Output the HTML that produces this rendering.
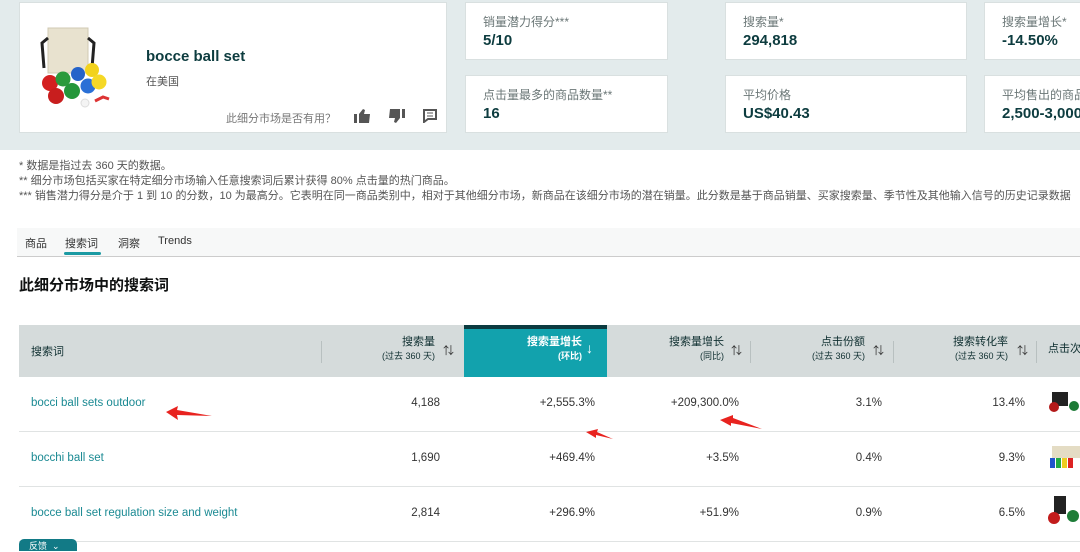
<!DOCTYPE html>
<html><head><meta charset="utf-8"><style>
*{margin:0;padding:0;box-sizing:border-box}
body{width:1080px;height:548px;overflow:hidden;background:#fff;font-family:"Liberation Sans","Noto Sans CJK SC",sans-serif;color:#0f1111;position:relative}
.top{position:absolute;left:0;top:0;width:1080px;height:150px;background:#e3ebec}
.card{position:absolute;background:#fff;border:1px solid #d9e0e0}
.lbl{position:absolute;left:17px;top:10px;font-size:12px;color:#6b7777}
.val{position:absolute;left:17px;top:29px;font-size:15px;font-weight:bold;color:#0d3c3f}
.a{position:absolute}
.note{font-size:11px;color:#555;line-height:15px}
.th{position:absolute;top:325px;height:52px;background:#d5dbdb}
.h{position:absolute;font-size:11px;color:#0f2f30;text-align:right;line-height:14px}
.h small{font-size:9px}
.row{position:absolute;left:19px;width:1061px;height:55px;border-bottom:1px solid #e0e3e3;font-size:11.5px;color:#333}
.row span{position:absolute;top:20px}
.kw{left:12px;color:#1b8a93}
.sep{position:absolute;top:341px;width:1px;height:22px;background:#b8c0c0}
.arr{position:absolute;font-size:11px;color:#333}
</style></head><body>
<div class="top"></div>
<div class="card" style="left:19px;top:2px;width:428px;height:131px">
<svg class="a" style="left:20px;top:20px" width="90" height="92" viewBox="0 0 90 92">
<rect x="8" y="5" width="40" height="45" fill="#e8e2cf" stroke="#d0c9b3"/>
<path d="M8 15 L2 20 L4 45 M48 15 L54 20 L52 45" stroke="#222" stroke-width="3" fill="none"/>
<circle cx="10" cy="60" r="8" fill="#d42020"/><circle cx="16" cy="73" r="8" fill="#c81e1e"/>
<circle cx="23" cy="56" r="7.5" fill="#2a9a3c"/><circle cx="32" cy="68" r="8" fill="#24963a"/>
<circle cx="38" cy="51" r="7" fill="#2563c9"/><circle cx="48" cy="63" r="7.5" fill="#2b70d6"/>
<circle cx="52" cy="47" r="7" fill="#f2d21c"/><circle cx="59" cy="59" r="7.5" fill="#f5d826"/>
<circle cx="45" cy="80" r="4" fill="#f4f4f4" stroke="#ddd"/><path d="M55 78 l8 -4 l6 2" stroke="#d33" stroke-width="3" fill="none"/>
</svg>
<div class="a" style="left:126px;top:45px;font-size:15px;font-weight:bold;color:#0d3c3f">bocce ball set</div>
<div class="a" style="left:126px;top:70px;font-size:11px;color:#555">在美国</div>
<div class="a" style="left:206px;top:107px;font-size:11px;color:#777">此细分市场是否有用？</div>
<svg class="a" style="left:334px;top:106px" width="16" height="14"><rect x="0" y="5" width="3" height="9" fill="#555"/><path d="M5 5 L9 0 L11 1 L10 5 L16 5 L15 14 L5 14 Z" fill="#555"/></svg>
<svg class="a" style="left:369px;top:106px" width="16" height="14"><rect x="13" y="0" width="3" height="9" fill="#555"/><path d="M11 9 L7 14 L5 13 L6 9 L0 9 L1 0 L11 0 Z" fill="#555"/></svg>
<svg class="a" style="left:403px;top:106px" width="14" height="14"><path d="M1 1 H13 V10 H5 L1 13 Z" fill="none" stroke="#555" stroke-width="2"/><path d="M4 4 H10 M4 7 H10" stroke="#555"/></svg>
</div>
<div class="card" style="left:465px;top:2px;width:203px;height:58px"><div class="lbl">销量潜力得分***</div><div class="val">5/10</div></div>
<div class="card" style="left:725px;top:2px;width:242px;height:58px"><div class="lbl">搜索量*</div><div class="val">294,818</div></div>
<div class="card" style="left:984px;top:2px;width:110px;height:58px"><div class="lbl">搜索量增长*</div><div class="val">-14.50%</div></div>
<div class="card" style="left:465px;top:75px;width:203px;height:58px"><div class="lbl">点击量最多的商品数量**</div><div class="val">16</div></div>
<div class="card" style="left:725px;top:75px;width:242px;height:58px"><div class="lbl">平均价格</div><div class="val">US$40.43</div></div>
<div class="card" style="left:984px;top:75px;width:110px;height:58px"><div class="lbl">平均售出的商品</div><div class="val" style="white-space:nowrap">2,500-3,000</div></div>
<div class="a note" style="left:19px;top:159px;white-space:nowrap">* 数据是指过去 360 天的数据。<br>** 细分市场包括买家在特定细分市场输入任意搜索词后累计获得 80% 点击量的热门商品。<br>*** 销售潜力得分是介于 1 到 10 的分数，10 为最高分。它表明在同一商品类别中，相对于其他细分市场，新商品在该细分市场的潜在销量。此分数是基于商品销量、买家搜索量、季节性及其他输入信号的历史记录数据</div>
<div class="a" style="left:17px;top:228px;width:1063px;height:29px;background:#f7f8f8;border-bottom:1px solid #ccc"></div>
<div class="a" style="left:25px;top:235px;font-size:11px;color:#333">商品</div>
<div class="a" style="left:65px;top:235px;font-size:11px;color:#333">搜索词</div>
<div class="a" style="left:64px;top:252px;width:37px;height:3px;background:#1b9aa3;border-radius:2px"></div>
<div class="a" style="left:118px;top:235px;font-size:11px;color:#333">洞察</div>
<div class="a" style="left:158px;top:235px;font-size:11px;color:#333">Trends</div>
<div class="a" style="left:19px;top:274px;font-size:15px;font-weight:bold;color:#0f1111">此细分市场中的搜索词</div>
<div class="th" style="left:19px;width:1061px"></div>
<div class="a" style="left:464px;top:325px;width:143px;height:52px;background:#12a2ad;border-top:4px solid #0b3b40"></div>
<div class="a" style="left:31px;top:343px;font-size:11px;color:#0f2f30">搜索词</div>
<div class="sep" style="left:321px"></div><div class="sep" style="left:750px"></div><div class="sep" style="left:893px"></div><div class="sep" style="left:1036px"></div>
<div class="h" style="right:645px;top:335px">搜索量<br><small>(过去 360 天)</small></div><div class="arr" style="left:443px;top:342px">⇅</div>
<div class="h" style="right:498px;top:335px;color:#fff;font-weight:bold">搜索量增长<br><small>(环比)</small></div><div class="arr" style="left:586px;top:340px;color:#fff;font-size:14px">↓</div>
<div class="h" style="right:356px;top:335px">搜索量增长<br><small>(同比)</small></div><div class="arr" style="left:731px;top:342px">⇅</div>
<div class="h" style="right:215px;top:335px">点击份额<br><small>(过去 360 天)</small></div><div class="arr" style="left:873px;top:342px">⇅</div>
<div class="h" style="right:72px;top:335px">搜索转化率<br><small>(过去 360 天)</small></div><div class="arr" style="left:1017px;top:342px">⇅</div>
<div class="h" style="left:1048px;top:342px;white-space:nowrap">点击次数</div>
<div class="row" style="top:377px"><span class="kw">bocci ball sets outdoor</span><span style="right:640px">4,188</span><span style="right:485px">+2,555.3%</span><span style="right:341px">+209,300.0%</span><span style="right:198px">3.1%</span><span style="right:55px">13.4%</span></div>
<div class="row" style="top:432px"><span class="kw">bocchi ball set</span><span style="right:640px">1,690</span><span style="right:485px">+469.4%</span><span style="right:341px">+3.5%</span><span style="right:198px">0.4%</span><span style="right:55px">9.3%</span></div>
<div class="row" style="top:487px"><span class="kw">bocce ball set regulation size and weight</span><span style="right:640px">2,814</span><span style="right:485px">+296.9%</span><span style="right:341px">+51.9%</span><span style="right:198px">0.9%</span><span style="right:55px">6.5%</span></div>
<svg class="a" style="left:1046px;top:390px" width="34" height="140"><rect x="6" y="2" width="16" height="14" fill="#222"/><circle cx="8" cy="17" r="5" fill="#b31919"/><circle cx="28" cy="16" r="5" fill="#1c7a36"/>
<rect x="6" y="56" width="28" height="12" fill="#e4dcc4"/><rect x="4" y="68" width="5" height="10" fill="#2255cc"/><rect x="10" y="68" width="5" height="10" fill="#22aa44"/><rect x="16" y="68" width="5" height="10" fill="#eecc22"/><rect x="22" y="68" width="5" height="10" fill="#dd2222"/>
<rect x="8" y="106" width="12" height="18" fill="#222"/><circle cx="8" cy="128" r="6" fill="#c21c1c"/><circle cx="27" cy="126" r="6" fill="#1e7d38"/></svg>
<div class="a" style="left:19px;top:539px;width:58px;height:12px;background:#127a86;border-radius:5px 5px 0 0;font-size:9px;color:#fff;padding-left:10px">反馈 &nbsp;⌄</div>
<svg class="a" style="left:0;top:0" width="1080" height="548">
<path d="M166 412 L178 406 L177 410 L212 416 L177 415 L178 420 Z" fill="#e8231f"/>
<path d="M586 432 L598 429 L597 432 L613 439 L596 435 L596 438 Z" fill="#e8231f"/>
<path d="M720 420 L733 415 L733 418 L762 429 L731 423 L731 426 Z" fill="#e8231f"/>
</svg>
</body></html>
